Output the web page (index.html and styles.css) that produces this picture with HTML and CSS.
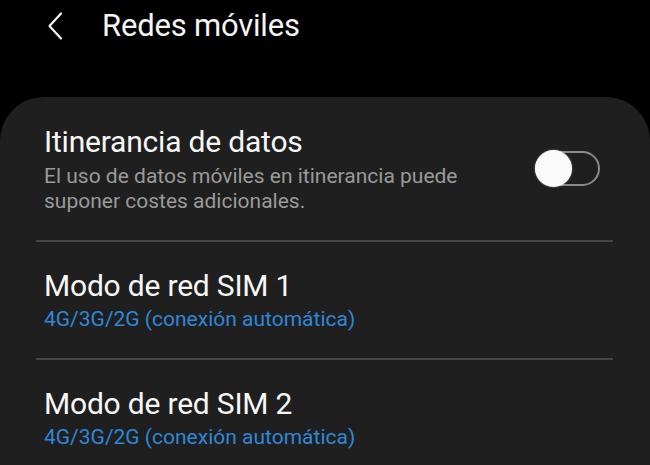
FILE: index.html
```html
<!DOCTYPE html>
<html lang="es">
<head>
<meta charset="utf-8">
<link rel="stylesheet" href="styles.css">
</head>
<body>
<div class="screen">
  <header class="appbar">
    <svg class="back" width="24" height="30" viewBox="0 0 24 30" aria-hidden="true">
      <path d="M16 2.5 L4.5 15 L16 27.5" fill="none" stroke="#f2f2f2" stroke-width="2.2" stroke-linecap="round" stroke-linejoin="round"/>
    </svg>
    <h1 class="title">Redes móviles</h1>
  </header>
  <main class="card">
    <div class="row row-toggle">
      <div class="texts">
        <div class="row-title">Itinerancia de datos</div>
        <div class="row-sub gray">El uso de datos móviles en itinerancia puede suponer costes adicionales.</div>
      </div>
      <div class="switch"><span class="knob"></span></div>
    </div>
    <div class="divider"></div>
    <div class="row">
      <div class="texts">
        <div class="row-title">Modo de red SIM 1</div>
        <div class="row-sub blue">4G/3G/2G (conexión automática)</div>
      </div>
    </div>
    <div class="divider"></div>
    <div class="row">
      <div class="texts">
        <div class="row-title">Modo de red SIM 2</div>
        <div class="row-sub blue">4G/3G/2G (conexión automática)</div>
      </div>
    </div>
  </main>
</div>
</body>
</html>
```
FILE: styles.css
```css
html, body {
  margin: 0;
  padding: 0;
  background: #000;
}
.screen {
  width: 650px;
  height: 465px;
  overflow: hidden;
  background: #000;
  font-family: Roboto, "Noto Sans", sans-serif;
  color: #f5f5f5;
}
.appbar {
  height: 97px;
  display: flex;
  align-items: flex-start;
  padding-top: 10px;
  box-sizing: border-box;
}
.back {
  margin-left: 45px;
  margin-top: 1px;
  flex: none;
}
.title {
  margin: 0 0 0 33px;
  font-weight: 400;
  font-size: 31px;
  line-height: 32px;
  letter-spacing: -0.2px;
  color: #f5f5f5;
}
.card {
  display: block;
  background: #1f1f1f;
  border-radius: 44px 44px 0 0;
  height: 368px;
}
.row {
  display: flex;
  align-items: center;
  justify-content: space-between;
  padding: 27px 50px 26px 44px;
}
.row-toggle {
  padding-top: 28px;
}
.texts {
  flex: 1;
}
.row-title {
  font-size: 30px;
  line-height: 34px;
  color: #f7f7f7;
  letter-spacing: -0.2px;
}
.row-sub {
  margin-top: 4px;
  font-size: 21px;
  line-height: 25px;
}
.row-toggle .row-sub {
  margin-top: 5px;
}
.row-toggle .texts {
  flex: 0 1 450px;
}
.gray { color: #9a9a9a; }
.blue { color: #2f87d8; }
.divider {
  height: 2px;
  background: #464646;
  margin: 0 37px 0 36px;
}
.switch {
  position: relative;
  width: 65px;
  height: 35px;
  box-sizing: border-box;
  border: 2px solid #8a8a8a;
  border-radius: 18px;
  margin-top: -2px;
  flex: none;
}
.knob {
  position: absolute;
  left: -2px;
  top: -3px;
  width: 37px;
  height: 37px;
  border-radius: 50%;
  background: #fafafa;
  box-shadow: 0 0 2px rgba(255,255,255,0.5);
}
```
